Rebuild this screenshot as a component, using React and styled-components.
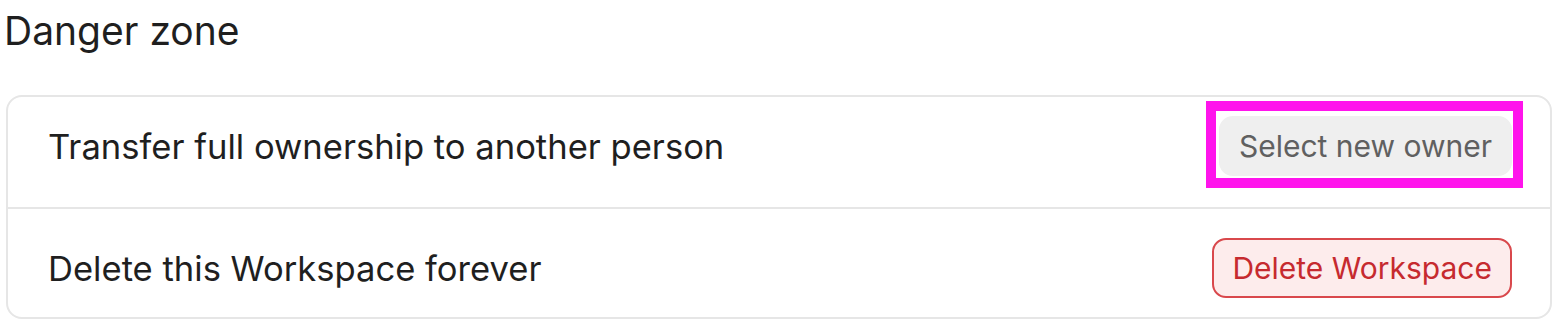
import styled, { createGlobalStyle } from 'styled-components';

const GlobalStyle = createGlobalStyle`
  body {
    margin: 0;
    background: #ffffff;
    font-family: Inter, 'Noto Sans', sans-serif;
    color: #1f1f1f;
  }
`;

const Page = styled.div`
  padding: 7px 6px 10px 6px;
`;

const Title = styled.h2`
  margin: 0 0 40px -2px;
  font-size: 39px;
  font-weight: 400;
  line-height: 48px;
  color: #1f1f1f;
`;

const Card = styled.div`
  border: 2px solid #e6e6e6;
  border-radius: 16px;
  overflow: hidden;
`;

const Row = styled.div`
  box-sizing: border-box;
  display: flex;
  align-items: center;
  justify-content: space-between;
  height: ${p => p.$height}px;
  padding: ${p => p.$top || 0}px 38px ${p => p.$bottom || 0}px 40px;

  &:not(:last-child) {
    border-bottom: 2px solid #e6e6e6;
  }
`;

const Label = styled.div`
  font-size: 34.6px;
  color: #1f1f1f;
`;

// magenta box drawn over the button to mark it
const Highlight = styled.div`
  position: relative;
  display: flex;

  &::after {
    content: '';
    position: absolute;
    top: -15px;
    right: -11px;
    bottom: -12px;
    left: -13px;
    border: 10px solid #ff14ec;
    pointer-events: none;
  }
`;

const Button = styled.button`
  font-family: inherit;
  font-size: 30px;
  height: 60px;
  padding: 0 18px;
  border-radius: 14px;
  cursor: pointer;
  border: 2px solid ${p => (p.$danger ? '#d9484c' : '#efefef')};
  background: ${p => (p.$danger ? '#fdecec' : '#efefef')};
  color: ${p => (p.$danger ? '#c62a2f' : '#606060')};
`;

export default function App() {
  return (
    <>
      <GlobalStyle />
      <Page>
        <Title>Danger zone</Title>
        <Card>
          <Row $height={112} $bottom={12}>
            <Label>Transfer full ownership to another person</Label>
            <Highlight>
              <Button>Select new owner</Button>
            </Highlight>
          </Row>
          <Row $height={108} $top={10}>
            <Label>Delete this Workspace forever</Label>
            <Button $danger>Delete Workspace</Button>
          </Row>
        </Card>
      </Page>
    </>
  );
}
